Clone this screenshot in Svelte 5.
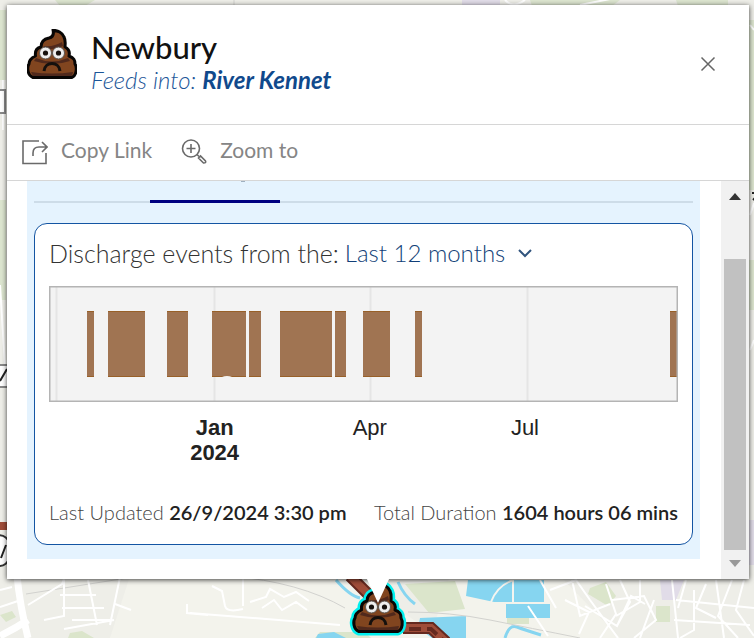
<script lang="ts">
  const spans = [
    [38, 7], [59, 37], [118, 21], [163, 34], [200, 12], [231, 52],
    [286, 11], [314, 27], [366, 7], [621, 8]
  ];
  const gridlines = [7, 165, 321, 478];
  const months = [
    { name: 'Jan', year: '2024' },
    { name: 'Apr', year: '' },
    { name: 'Jul', year: '' }
  ];
  let range = $state('12');
</script>

{#snippet poo()}
  <path class="body" d="M26 1C31 2 35 3 37 8C39 12 38 15 38 18C42 20 43 23 42 27C47 29 48 31 48 35C50 38 50 46 45 48.500H6C0 46 0 38 2 35C2 31 4 29 8.500 27C8 23 9 19 14 18C14 13 17 10 22 9C26 8 27 5 26 1Z" />
  <path class="shade" d="M9 29Q25 36 41 29L43 32Q25 38 7 32Z M4 43Q25 46 46 43L45 47H6Z M17 17Q27 18 35 13L36 17Q27 21 16 20Z" />
  <circle cx="18.500" cy="24" r="6" fill="#eee" stroke="#5b5550" />
  <circle cx="31.500" cy="24" r="6" fill="#eee" stroke="#5b5550" />
  <circle cx="18.500" cy="24" r="2.600" fill="#16110e" />
  <circle cx="31.500" cy="24" r="2.600" fill="#16110e" />
  <path d="M17 42C18 32 32 32 33 42" fill="none" stroke="#15100d" stroke-width="3" />
{/snippet}

<main>
  <svg class="map" viewBox="0 0 754 638" preserveAspectRatio="xMidYMax slice" aria-hidden="true">
    <rect width="754" height="638" fill="#eeeee8" />
    <path fill="#f3f3ec" d="M130 576H350L440 638H110Z M450 576H560L620 638H430Z" />
    <path fill="#dce5cf" d="M55 0h40l-10 6H60z M530 0h90l-8 6h-80z M676 0h52v6h-50z M0 10h6v70H0z M0 200h6v100H0z M748 20h6v170h-6z M748 260h6v50h-6z" />
    <path fill="#dbe5cb" d="M70 633l12-2 12 7H68z M590 588l16-6 10 14-8 10-20-12z M656 606h14v16h-14z M0 615l12-4 4 6-10 5z M405 584l50-3 10 28-36 4z M507 612h22v12h-22z M320 632l45 0 6 6h-56z" />
    <path fill="#e1dce8" d="M462 0h38v6h-38z M660 580h24l-8 20h-14z M749 520h5v45h-5z" />
    <path fill="#86d5f0" d="M468 580h76v22h-50l-28-6z M506 604h44v14h-44z M420 618l46-2v22h-34l-14-10z M318 634l16-2 12 6h-30z" />
    <path fill="none" stroke="#86d5f0" stroke-width="3" d="M336 580q14 16 24 18M398 582q6 14 17 22M505 638q4-14 12-11t24 8" />
    <path fill="none" stroke="#f5f5f0" stroke-width="2" d="M491 602q6-16 22-22M513 580v22" />
    <path fill="none" stroke="#d2d2cf" d="M26 594L140 576M230 576Q300 582 345 608M408 612Q450 612 490 620T580 638M234 0V5" />
    <path fill="none" stroke="#fff" stroke-width="7" d="M17 576Q20 606 28 638M0 636Q16 628 28 620" />
    <path fill="none" stroke="#fff" stroke-width="2" d="M28 605L62 584 65 576M60 595h36M62 608h42M64 580v36l-20 4M88 580l9 45M110 625l10-48M72 620h38M64 629l50-9M115 604l16 6M187 604v9l21 2M190 613L340 625M212 586l10 5 3 15q2 7 18 3M243 576v30M250 602l16-5 4-8 14 8 12-5 13 9M262 608l12-8 8 10 14-8 11 8M0 607l18-6M0 590l12-3" />
    <path fill="none" stroke="#fff" stroke-width="2" d="M550 590l26-10 14 20 28 38M565 600l24 12-10 22M572 580l8 36 30-12M585 606l32 20 14-30 14 8M600 638l16-24-10-30M620 580l10 22-12 22M612 600l32-4 12 24-22 18M640 580v22l-24 14M654 600l-14 38M672 580l6 58M676 600l78 8M686 580l-8 28M694 590v40l-14 8M706 584l-10 24 20 10M716 580l8 58M674 620l76 5M732 580l-14 36 20 22M744 580l-8 30 18 26M528 606l20 30M540 580l16 28" />
    <path fill="none" stroke="#fff" stroke-width="2" d="M505 0q8 9 20 0M580 5l30-6M0 285l5 80M3 130v-50M750 25l4 5M750 215l4-12M750 350l4-10" />
    <path fill="none" stroke="#65291f" stroke-width="12" d="M350 576l18 18M403 628h28l15 14" />
    <path fill="none" stroke="#9f4d39" stroke-width="8" d="M350 576l18 18M403 628h28l15 14M0 526h8" />
    <path fill="none" stroke="#65291f" stroke-width="4" stroke-dasharray="12 6" d="M409 629h22l13 12" />
    <path fill="#fff" stroke="#888" stroke-width="2" d="M-9 90H5v23H-9z M-9 365H10v22H-9z" />
    <path fill="#fff" stroke="#333" stroke-width="2" d="M-5 536Q8 532 12 550Q8 570-5 565" />
    <path fill="none" stroke="#222" stroke-width="2" d="M0 381l7-12M1 558l5-13M752 193h3M753 200l2-2" />
  </svg>

  <svg class="marker" viewBox="-4 -4 58 58" aria-hidden="true">
    <g class="glow">{@render poo()}</g>
    {@render poo()}
  </svg>

  <section class="popup">
    <div class="frame">
      <header>
        <svg class="logo" viewBox="0 0 50 50" aria-hidden="true">{@render poo()}</svg>
        <div class="title">
          <h1>Newbury</h1>
          <p>Feeds into: <b>River Kennet</b></p>
        </div>
        <button class="close" aria-label="Close">
          <svg viewBox="0 0 16 16"><path d="M1.500 1.500l13 13M14.500 1.500l-13 13" /></svg>
        </button>
      </header>

      <nav>
        <button>
          <svg viewBox="0 0 26 26"><path d="M17 2H1v22.500h23V14M11 17v-3q0-6 6-6h8M20 3l5 5-5 5" /></svg>
          Copy Link
        </button>
        <button>
          <svg viewBox="0 0 26 26"><circle cx="10" cy="9.500" r="8.500" /><path d="M10 5v9M5.500 9.500h9M16 15.500l2 2" /><path d="M17.500 19l2-2 5 5q1 2-2 2z" /></svg>
          Zoom to
        </button>
      </nav>

      <div class="viewport">
        <div class="content">
          <div class="tabs"><span class="active"></span></div>
          <article>
            <div class="filter">
              <label for="range">Discharge events from the:</label>
              <span class="picker">
                <select id="range" bind:value={range}><option value="12">Last 12 months</option></select>
                <svg viewBox="0 0 14 10" aria-hidden="true"><path d="M1 2l6 6 6-6" /></svg>
              </span>
            </div>
            <svg class="chart" viewBox="0 0 629 116" preserveAspectRatio="none" role="img" aria-label="Discharge events">
              <rect width="629" height="116" fill="#f3f3f3" />
              {#each gridlines as x}<path d="M{x + 0.5} 0V116" stroke="#e5e5e5" stroke-width="2" />{/each}
              {#each spans as [x, w]}
                <rect {x} y="25" width={w} height="66" fill="#a07452" />
                <path d="M{x} 25.500h{w}M{x} 90.500h{w}" stroke="#986028" />
              {/each}
              <path d="M173 91q2-1 5-1t5 1" fill="#f3f3f3" />
              <rect x="0.500" y="0.500" width="628" height="115" fill="none" stroke="#b4b4b4" stroke-width="2" />
            </svg>
            <div class="axis">
              {#each months as m}
                <div class:major={m.year}>{m.name}{#if m.year}<br />{m.year}{/if}</div>
              {/each}
            </div>
            <footer>
              <span>Last Updated <b>26/9/2024 3:30 pm</b></span>
              <span>Total Duration <b>1604 hours 06 mins</b></span>
            </footer>
          </article>
        </div>
        <div class="scrollbar" aria-hidden="true">
          <svg viewBox="0 0 12 7"><path d="M0 7L6 0l6 7z" fill="#333" /></svg>
          <div class="thumb"></div>
          <svg viewBox="0 0 12 7"><path d="M0 0h12L6 7z" fill="#999" /></svg>
        </div>
      </div>
    </div>
    <svg class="pointer" viewBox="0 0 24 26" aria-hidden="true"><path d="M0 0h24L12 26z" fill="#fff" /></svg>
  </section>
</main>

<style>
  :global(body) { margin: 0; }
  main {
    position: relative;
    box-sizing: border-box;
    min-height: 100vh;
    padding: 5px 5px 58px 7px;
    overflow: hidden;
    font-family: Lato, "Liberation Sans", sans-serif;
    color: #151515;
  }
  .map { position: absolute; inset: 0; width: 100%; height: 100%; }
  .marker { position: absolute; left: 50%; bottom: 1px; width: 58px; height: 58px; transform: translateX(-28px); }
  .popup { position: relative; }
  .frame { background: #fff; box-shadow: 0 1px 5px rgba(0, 0, 0, 0.75); }
  .pointer { position: absolute; top: 100%; left: 50%; width: 24px; height: 24px; margin-left: -12px; }

  .body { fill: #81451f; stroke: #080605; stroke-width: 3; stroke-linejoin: round; }
  .shade { fill: #50291c; }
  .glow .body { stroke: #00f0ef; stroke-width: 8; }

  header { display: flex; align-items: flex-start; padding: 24px 33px 27px 20px; border-bottom: 1px solid #d6d6d6; }
  .logo { width: 50px; height: 50px; }
  .title { flex: 1; margin-left: 14px; }
  h1 { margin: 0; font-family: "Lato Medium", Lato, sans-serif; font-size: 31px; line-height: 36px; font-weight: 500; color: #111; }
  p { margin: 0; font-size: 24px; line-height: 30px; padding-bottom: 2px; font-style: italic; font-weight: 300; color: #1c5698; }
  p b { font-weight: 700; color: #10498c; }
  button { font: inherit; border: 0; padding: 0; background: none; cursor: pointer; }
  .close { margin-top: 27px; line-height: 0; }
  .close svg { width: 16px; height: 16px; }
  .close path { stroke: #666; stroke-width: 1.500; }

  nav { display: flex; gap: 29px; padding: 0 15px; height: 55px; border-bottom: 1px solid #d6d6d6; }
  nav button { display: flex; align-items: center; gap: 13px; padding-bottom: 5px; font-size: 21px; line-height: 28px; color: #858585; }
  nav svg { width: 26px; height: 26px; margin-top: 4px; fill: none; stroke: #6a6a6a; stroke-width: 1.600; }

  .viewport { display: flex; justify-content: space-between; }
  .content { flex: 1; margin: 0 21px 20px 20px; padding: 0 7px 14px; background: #e5f3fe; }
  .tabs { display: flex; height: 20px; padding-left: 116px; border-bottom: 2px solid #cddce8; }
  .active {
    width: 130px;
    height: 19px;
    border-bottom: 3px solid #000080;
    background: linear-gradient(#9fb0c0, #9fb0c0) 91px 0 / 4px 1px no-repeat;
  }
  article { margin-top: 20px; padding: 14px 14px 18px; border: 1px solid #1455a3; border-radius: 13px; background: #fff; }
  .filter { display: flex; gap: 6px; height: 32px; margin-bottom: 16px; font-size: 25px; line-height: 30px; font-weight: 300; color: #333; white-space: nowrap; }
  .picker { display: flex; align-items: center; gap: 12px; height: 30px; font-size: 24px; }
  select { appearance: none; margin: 0; padding: 0; border: 0; background: none; font: inherit; color: #123f78; }
  .picker svg { width: 14px; height: 10px; fill: none; stroke: #31547d; stroke-width: 2; }
  .chart { display: block; width: 100%; height: 116px; }
  .axis { display: grid; grid-template-columns: repeat(3, 1fr); margin: 13px 12% 33px 14%; font-family: "Liberation Sans", sans-serif; font-size: 22px; line-height: 25px; text-align: center; color: #222; }
  .major { font-weight: 700; }
  footer { display: flex; justify-content: space-between; font-size: 20px; line-height: 28px; font-weight: 300; color: #444; white-space: nowrap; }
  footer b { font-family: "Lato Semibold", Lato, sans-serif; font-weight: 600; color: #222; }

  .scrollbar { display: flex; flex-direction: column; align-items: center; width: 28px; padding: 12px 0; box-sizing: border-box; background: #f1f1f1; }
  .scrollbar svg { width: 12px; height: 7px; flex: none; }
  .thumb { flex: 1; width: 22px; margin: 59px 0 10px; background: #c1c1c1; }
</style>
